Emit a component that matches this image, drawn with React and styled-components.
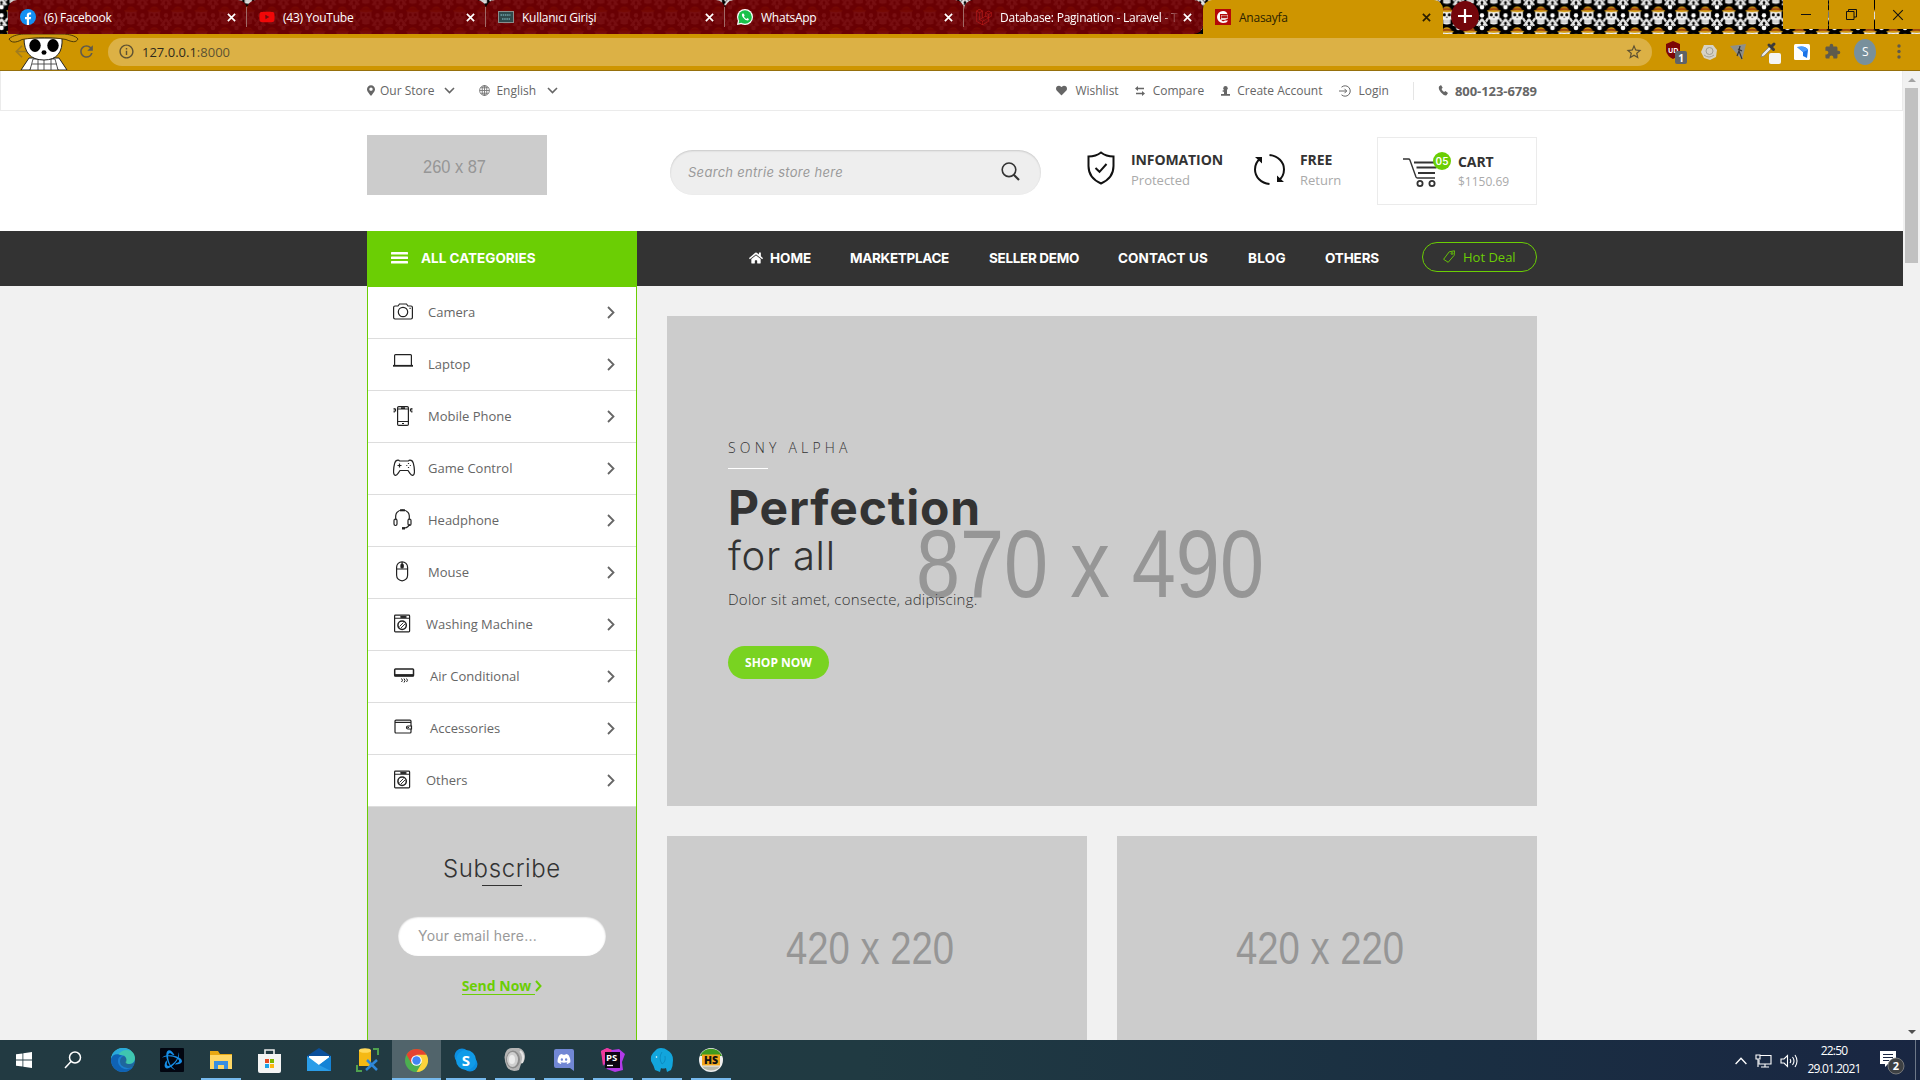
import React from 'react';
import styled, { createGlobalStyle } from 'styled-components';
import {
  FaYoutube, FaLaravel, FaMapMarkerAlt, FaHeart, FaPhoneAlt, FaHome, FaDiscord,
} from 'react-icons/fa';
import { MdExtension, MdStarBorder, MdRefresh, MdArrowBack, MdInfoOutline } from 'react-icons/md';
import { SiBattledotnet } from 'react-icons/si';

const body = '"Open Sans", "Noto Sans", sans-serif';
const display = 'Inter, "Open Sans", sans-serif';
const green = '#6bce04';

const Global = createGlobalStyle`
  * { box-sizing: border-box; }
  html, body { margin: 0; padding: 0; overflow: hidden; }
  body { font-family: ${body}; color: #666; background: #f1f1f1; }
  svg { display: block; flex: none; }
`;

const Screen = styled.div`
  width: 1920px;
  height: 1080px;
  display: flex;
  flex-direction: column;
  overflow: hidden;
`;

/* ---------- browser chrome ---------- */

const TabStrip = styled.div`
  position: relative;
  height: 34px;
  flex: none;
  display: flex;
  background: #000;
`;
const StripArt = styled.svg`
  position: absolute;
  inset: 0;
`;
const Tabs = styled.div`
  position: relative;
  display: flex;
  padding-left: 8px;
`;
const Tab = styled.div`
  width: ${p => p.$w}px;
  height: 34px;
  display: flex;
  align-items: center;
  padding: 0 ${p => (p.$active ? 12 : 0)}px 0 12px;
  font-size: 12px;
  letter-spacing: -0.24px;
  color: ${p => (p.$active ? '#2c1f00' : '#fff')};
  background: ${p => (p.$active ? '#ce9500' : 'rgba(112, 0, 3, 0.94)')};
  border-radius: ${p => (p.$active ? '9px 9px 0 0' : p.$last ? '9px 9px 9px 0' : '9px 9px 0 0')};
`;
const TabIcon = styled.span`
  width: 16px;
  height: 16px;
  display: flex;
  align-items: center;
  justify-content: center;
  margin-right: 8px;
`;
const TabTitle = styled.span`
  flex: 1;
  white-space: nowrap;
  overflow: hidden;
  ${p => p.$fade && 'mask-image: linear-gradient(90deg, #000 160px, transparent 180px);'}
`;
const TabLine = styled.i`
  width: 1px;
  height: 20px;
  margin-left: 10px;
  background: ${p => (p.$hide ? 'transparent' : '#a06a66')};
`;
const NewTab = styled.div`
  width: 28px;
  height: 30px;
  margin: 1px 0 0 8px;
  border-radius: 50%;
  background: #74060b;
  display: flex;
  align-items: center;
  justify-content: center;
`;
const WindowButtons = styled.div`
  position: relative;
  margin-left: auto;
  display: flex;
  gap: 1px;
  height: 29px;
`;
const WindowButton = styled.div`
  width: 45px;
  height: 29px;
  background: #ce9500;
  display: flex;
  align-items: center;
  justify-content: center;
`;

const Toolbar = styled.div`
  height: 37px;
  flex: none;
  display: flex;
  align-items: center;
  padding: 0 12px 1px 0;
  background: #ce9500;
  border-bottom: 1px solid #96700c;
  color: #5f5a4c;
`;
const NavArt = styled.div`
  width: 77px;
  height: 36px;
  display: flex;
  align-items: center;
  position: relative;
  padding-left: 12px;
  color: #9f7b20;
`;
const Mascot = styled.svg`
  position: absolute;
  left: 8px;
  top: 0;
`;
const AddressBar = styled.div`
  width: 1544px;
  height: 28px;
  margin-left: 12px;
  padding: 0 9px 0 10px;
  border-radius: 14px;
  background: #dcb145;
  display: flex;
  align-items: center;
  font-size: 13px;
  color: #5d5132;
`;
const Host = styled.span`
  margin-left: 7px;
  flex: 1;
  b { font-weight: 400; color: #2f2a1c; }
`;
const Extensions = styled.div`
  margin-left: 13px;
  display: flex;
  align-items: center;
  justify-content: space-between;
  flex: 1;
`;
const Avatar = styled.div`
  width: 22px;
  height: 26px;
  border-radius: 50%;
  background: #78909c;
  color: #fff;
  font-size: 12px;
  display: flex;
  align-items: center;
  justify-content: center;
`;

/* ---------- page ---------- */

const Viewport = styled.div`
  display: flex;
  height: 969px;
  flex: none;
`;
const Page = styled.div`
  width: 1903px;
  height: 969px;
  overflow: hidden;
  background: #f1f1f1;
`;
const Scrollbar = styled.div`
  width: 17px;
  display: flex;
  flex-direction: column;
  align-items: center;
  background: #f1f1f1;
`;
const ScrollArrow = styled.div`
  height: 17px;
  display: flex;
  align-items: center;
`;
const Thumb = styled.div`
  width: 13px;
  height: 175px;
  background: #c1c1c1;
  margin-bottom: auto;
`;

const Band = styled.div`
  display: flex;
  padding: 0 366px 0 367px;
`;
const TopBar = styled(Band)`
  height: 40px;
  align-items: center;
  background: #fff;
  border: 1px solid #ebebeb;
  border-top: 0;
  padding: 0 365px 0 366px;
  font-size: 12px;
  color: #666;
`;
const TopItem = styled.div`
  display: flex;
  align-items: center;
  margin-left: ${p => p.$ml || 0}px;
  gap: ${p => p.$gap}px;
  font-size: ${p => (p.$bold ? 13 : 12)}px;
  font-weight: ${p => (p.$bold ? 700 : 400)};
  letter-spacing: ${p => (p.$bold ? -0.05 : 0)}px;
  white-space: nowrap;
`;
const TopLinks = styled.div`
  display: flex;
  align-items: center;
  margin-left: auto;
`;
const Caret = styled.span`
  margin-left: 5px;
`;
const MapPin = styled(FaMapMarkerAlt)`
  width: 8px;
  height: 11px;
`;
const Handset = styled(FaPhoneAlt)`
  width: 10px;
  height: 10px;
  transform: scaleX(-1);
`;
const TopRule = styled.i`
  width: 1px;
  height: 18px;
  margin-left: 24px;
  background: #e5e5e5;
`;

const Header = styled(Band)`
  height: 120px;
  background: #fff;
  align-items: flex-start;
`;
const Logo = styled.div`margin-top: 24px;`;
const Search = styled.div`
  width: 371px;
  height: 45px;
  margin: 39px 0 0 123px;
  padding: 0 21px 2px 18px;
  border-radius: 23px;
  background: #eee;
  box-shadow: inset 0 1px 2px rgba(0, 0, 0, 0.16);
  display: flex;
  align-items: center;
  justify-content: space-between;
  font: italic 13px ${display};
  letter-spacing: 0.29px;
  color: #9a9a9a;
`;
const Feature = styled.div`
  display: flex;
  margin: 39px 0 0 ${p => p.$ml}px;
`;
const FeatureIcon = styled.span`
  margin-top: ${p => p.$mt}px;
`;
const FeatureText = styled.div`
  margin-left: ${p => p.$ml}px;
  font-size: ${p => p.$size || 13}px;
  line-height: 20px;
  color: #aaa;
  b {
    display: block;
    font-size: 14px;
    line-height: 20px;
    color: #333;
    letter-spacing: -0.1px;
  }
`;
const Cart = styled.div`
  width: 160px;
  height: 68px;
  margin: 26px 0 0 auto;
  padding: 14px 0 0 25px;
  border: 1px solid #ebebeb;
  display: flex;
`;
const CartIcon = styled.div`
  position: relative;
  width: 49px;
`;
const CartCount = styled.span`
  position: absolute;
  left: 30px;
  top: 0;
  width: 18px;
  height: 18px;
  border-radius: 50%;
  background: ${green};
  color: #fff;
  font: 600 10px/18px ${display};
  text-align: center;
`;

const NavBar = styled(Band)`
  height: 55px;
  background: #333;
  align-items: center;
`;
const AllCategories = styled.div`
  width: 270px;
  height: 56px;
  align-self: flex-start;
  padding: 0 0 2px 24px;
  display: flex;
  align-items: center;
  gap: 13px;
  background: ${green};
  color: #fff;
  font: 700 13.5px ${display};
`;
const NavLink = styled.div`
  display: flex;
  align-items: center;
  width: ${p => p.$w}px;
  margin-left: ${p => p.$ml}px;
  padding-bottom: 2px;
  gap: 7px;
  color: #fff;
  font: 700 13.5px ${display};
  letter-spacing: ${p => p.$ls}px;
  white-space: nowrap;
`;
const HotDeal = styled.div`
  width: 115px;
  height: 30px;
  margin-left: auto;
  margin-bottom: 4px;
  border: 1px solid ${green};
  border-radius: 16px;
  display: flex;
  align-items: center;
  padding-left: 20px;
  gap: 8px;
  color: ${green};
  font-size: 13px;
`;

const Content = styled(Band)`
  height: 754px;
  align-items: flex-start;
`;
const Sidebar = styled.div`
  width: 270px;
  height: 754px;
  margin-top: 1px;
  border: solid ${green};
  border-width: 0 1px;
  background: #ccc;
`;
const Category = styled.div`
  height: 52px;
  display: flex;
  align-items: center;
  padding: 0 21px 2px 25px;
  border-bottom: 1px solid #ddd;
  background: #fff;
  font-size: 13px;
  color: #666;
`;
const CategoryIcon = styled.span`
  width: ${p => p.$w}px;
`;
const CategoryName = styled.span`flex: 1;`;
const CategoryArrow = styled.span`padding-top: 2px;`;

const Subscribe = styled.div`
  display: flex;
  flex-direction: column;
  align-items: center;
  padding-top: 45px;
`;
const SubscribeTitle = styled.h3`
  margin: 0;
  font: 300 24px/33px ${display};
  letter-spacing: 0.6px;
  color: #333;
`;
const Dash = styled.i`
  width: 40px;
  height: 1px;
  background: ${p => p.$color};
`;
const EmailField = styled.div`
  width: 208px;
  height: 40px;
  margin-top: 30px;
  padding-left: 20px;
  border-radius: 20px;
  background: #fff;
  box-shadow: inset 0 1px 2px rgba(0, 0, 0, 0.25);
  font: 400 14px/39px ${display};
  letter-spacing: 0.22px;
  color: #999;
`;
const SendNow = styled.div`
  display: flex;
  align-items: center;
  margin-top: 21px;
  color: ${green};
  font-size: 14px;
  font-weight: 700;
  span { border-bottom: 1px solid ${green}; line-height: 17px; padding-right: 4px; }
`;

const Main = styled.div`
  margin: 30px 0 0 30px;
  display: flex;
  flex-direction: column;
  gap: 30px;
`;
const Hero = styled.div`
  position: relative;
  width: 870px;
  height: 490px;
  background: #ccc;
`;
const HeroPicture = styled.div`
  position: absolute;
  inset: 0;
`;
const HeroCopy = styled.div`
  position: relative;
  display: flex;
  flex-direction: column;
  align-items: flex-start;
  padding: 122px 0 0 61px;
  color: #333;
`;
const Kicker = styled.div`
  font-size: 14px;
  font-weight: 300;
  line-height: 20px;
  letter-spacing: 4.2px;
  margin-bottom: 10px;
`;
const Title = styled.div`
  margin-top: 15px;
  font: 700 48px/48px ${display};
  letter-spacing: 0.85px;
`;
const Subtitle = styled.div`
  font: 300 40px/48px ${display};
  letter-spacing: 0.7px;
`;
const Blurb = styled.div`
  margin-top: 7px;
  font-size: 15px;
  font-weight: 300;
  line-height: 24px;
  letter-spacing: 0.26px;
`;
const ShopNow = styled.div`
  width: 101px;
  height: 33px;
  margin-top: 35px;
  border-radius: 17px;
  background: #79d321;
  color: #fff;
  font-size: 12px;
  font-weight: 700;
  line-height: 33px;
  text-align: center;
`;
const Promos = styled.div`
  display: flex;
  gap: 30px;
`;

/* ---------- taskbar ---------- */

const Taskbar = styled.div`
  height: 40px;
  flex: none;
  display: flex;
  background: linear-gradient(90deg, #223a42 0%, #203a42 45%, #1a2f42 75%, #192642 100%);
  color: #fff;
`;
const TaskSlot = styled.div`
  width: 49px;
  height: 40px;
  display: flex;
  flex-direction: column;
  align-items: center;
  justify-content: space-between;
  background: ${p => (p.$active ? '#51646b' : 'transparent')};
`;
const TaskIcon = styled.span`
  height: 38px;
  display: flex;
  align-items: center;
  padding: ${p => (p.$shift ? '2px 2px 0 0' : '2px 0 0')};
`;
const TaskLine = styled.i`
  width: ${p => (p.$active ? 49 : 40)}px;
  height: 2px;
  background: ${p => (p.$on ? '#76b9ed' : 'transparent')};
`;
const Tray = styled.div`
  margin-left: auto;
  display: flex;
  align-items: center;
`;
const TrayIcons = styled.div`
  display: flex;
  align-items: center;
  gap: 8px;
  padding-top: 1px;
`;
const Clock = styled.div`
  width: 54px;
  margin: 0 18px 0 9px;
  text-align: center;
  font-size: 12px;
  line-height: 18px;
  letter-spacing: -0.82px;
`;
const Notifications = styled.div`
  padding-top: 3px;
  margin-right: 10px;
`;
const ShowDesktop = styled.i`
  width: 5px;
  height: 40px;
  border-left: 1px solid #6d7788;
`;

/* ---------- drawings ---------- */

const SkullPattern = () => (
  <StripArt width="1920" height="34">
    <defs>
      <pattern id="skulls" x="1411.5" y="5.300" width="23.5" height="20.700" patternUnits="userSpaceOnUse">
        <path d="M6 13L0 22.500M17.500 13l6 9.500M6 -7.700L0 1.800M17.500 -7.700l6 9.500M4 0L-2 -8M19.500 0l6-8M5 20.700L-3 10M18.500 20.700l8-10.700" stroke="#e6e6e6" strokeWidth="2.300" strokeDasharray="4 .6" fill="none" />
        <circle cx="0" cy="2" r="2.300" fill="#fff" /><circle cx="23.500" cy="2" r="2.300" fill="#fff" />
        <circle cx="0" cy="10" r="2.200" fill="#fff" /><circle cx="23.500" cy="10" r="2.200" fill="#fff" />
        <path d="M6.200 6h11.200v6.500q0 1.500-2 2v4q-3.600 1.500-7.200 0v-4q-2-.5-2-2z" fill="#f2f2f2" />
        <path d="M9.800 14.500v3.500M11.800 14.500v3.500M13.800 14.500v3.500" stroke="#888" strokeWidth=".6" />
        <circle cx="9.300" cy="9.500" r="1.500" /><circle cx="14.300" cy="9.500" r="1.500" /><circle cx="11.800" cy="12" r=".7" />
        <ellipse cx="11.800" cy="5.600" rx="7" ry="1.300" fill="#d29a10" />
        <path d="M7.800 4.500c0-4.200 8-4.200 8 0z" fill="#d29a10" />
        <path d="M7.500 5.300q4.300-1.400 8.600 0v-2q-4.300-1.200-8.600 0z" fill="#a4480c" />
      </pattern>
    </defs>
    <rect width="1920" height="34" fill="url(#skulls)" />
  </StripArt>
);

const Cross = ({ s = 9, c = 'currentColor', w = 1.9 }) => (
  <svg width={s} height={s} viewBox="0 0 10 10"><path d="M1 1l8 8M9 1L1 9" stroke={c} strokeWidth={w} /></svg>
);
const Chevron = ({ w = 8, h = 13, sw = 1.8, down, c = 'currentColor' }) => (
  <svg width={w} height={h} viewBox={`0 0 ${w} ${h}`} fill="none" stroke={c} strokeWidth={sw}>
    {down ? <path d={`M1 1 L${w / 2} ${h - 1.5} L${w - 1} 1`} /> : <path d={`M1 1 L${w - 1.5} ${h / 2} L1 ${h - 1}`} />}
  </svg>
);

const Facebook = () => (
  <svg width="16" height="16"><circle cx="8" cy="8" r="8" fill="#1490f2" /><path d="M6.800 16V10.200H5V8h1.800V6.300C6.800 4.300 8 3.400 9.600 3.400l1.500.1v1.900h-1c-.9 0-1.100.5-1.100 1.100V8h2.100l-.4 2.200H9V16z" fill="#fff" /></svg>
);
const WhatsApp = () => (
  <svg width="16" height="16"><circle cx="8" cy="8" r="8" fill="#fff" /><path d="M0 16l1-5 4 4z" fill="#fff" /><circle cx="8" cy="8" r="6.800" fill="#18c14a" /><path d="M1.500 14.600l1-3.500 2.500 2.500z" fill="#18c14a" /><path d="M5.500 4.500q-1.500 1 .5 4t5 3q1.500-1 .5-1.800l-1-.6-1 .8q-2-.8-2.500-2.500l.6-.8-.7-1.800q-.6-.6-1.400-.3z" fill="#fff" /></svg>
);
const Exam = () => (
  <svg width="16" height="12" viewBox="0 0 16 12"><rect width="16" height="12" fill="#8a8d8c" /><rect x="1" y="1" width="14" height="10" fill="#2f4a4c" /><path d="M2.500 4h10M4 8h8" stroke="#6fa3a8" strokeWidth="1.500" strokeDasharray="1.500 .7" /></svg>
);
const SiteIcon = () => (
  <svg width="16" height="16"><rect width="16" height="16" fill="#b40808" /><path d="M8 2a6 6 0 1 0 0 12q4 0 5-2.500h-3l-2 1-3-2.500V5h6.500l1 .5Q12 2 8 2z" fill="#fff" /><path d="M6 6h7v3.500l-3 1.500H6z" fill="#e9d0d0" /><path d="M6.500 6.500h6V9h-6z" fill="#b11a1a" /></svg>
);

const MascotArt = () => (
  <Mascot width="72" height="36" viewBox="0 0 72 36">
    <path d="M13 36 L21 24 L27 24 L22 36z M59 36 L51 24 L45 24 L50 36z" fill="#fff" stroke="#222" strokeWidth="1" />
    <path d="M25 25h22l3 11H22z" fill="#fff" stroke="#333" strokeWidth=".8" />
    <path d="M30 25v11M36 25v11M43 25v11M24 30h25" stroke="#444" strokeWidth=".9" />
    <path d="M16 4 C16 18 22 26 36 26 C49 26 55 18 54 4z" fill="#fff" stroke="#222" strokeWidth="1" />
    <ellipse cx="27" cy="11.500" rx="5.700" ry="6.500" fill="#000" /><ellipse cx="45" cy="11.500" rx="5.700" ry="6.500" fill="#000" />
    <ellipse cx="36" cy="18.500" rx="2.500" ry="2.300" fill="#000" />
    <path d="M1 5 C5 1 12 0 18 0 H54 C61 0 68 2 70 5 C68 9 64 8 58 5.500 C45 3 28 3 14 5.500 C8 9 3 9 1 5z" fill="#cf9a10" stroke="#4d3a08" strokeWidth="1" />
  </Mascot>
);

const Placeholder = ({ w, h, label, tx, ty, tw, size }) => (
  <svg width={w} height={h}>
    <rect width={w} height={h} fill="#ccc" />
    <text x={tx} y={ty} fontFamily="Liberation Sans, sans-serif" fontSize={size} fill="#969696" textLength={tw} lengthAdjust="spacingAndGlyphs">{label}</text>
  </svg>
);

const ink = { fill: 'none', stroke: '#222', strokeWidth: 1.2 };
const Camera = () => (
  <svg width="20" height="17" viewBox="0 0 20 17" {...ink}><path d="M2 3h3l1.500-2h7L15 3h3q1.400 0 1.400 1.400v10.200q0 1.400-1.400 1.400H2Q.6 16 .6 14.600V4.400Q.6 3 2 3z" /><circle cx="10" cy="9" r="4.700" /><path d="M16.500 5.300h1.200" /></svg>
);
const Laptop = () => (
  <svg width="20" height="20" viewBox="0 0 20 20" {...ink}><path d="M1.600 11V1.500q0-.9.900-.9h15q.9 0 .9.900V11" /><path d="M0 11.800h20" strokeWidth="1.800" /></svg>
);
const Phone = () => (
  <svg width="20" height="20" viewBox="0 0 20 20" {...ink}><rect x="4.600" y=".6" width="10.800" height="18.800" rx="1.200" /><path d="M4.600 3h10.800M4.600 15.500h10.800M8 1.800h4M9 17.500h2" /><path d="M1.200 2v1.800M2.500 2.500v3M1.200 4.500v2M18.800 2v1.800M17.500 2.500v3M18.800 4.500v2" /></svg>
);
const Gamepad = () => (
  <svg width="22" height="17" viewBox="0 0 22 17" {...ink}><path d="M5 1.200q-2.500 0-3.300 3Q.4 9 .6 13.500q.2 2.900 2 2.900 1.400 0 2.300-1.800L7 11.500h8l2.100 3.100q.9 1.800 2.300 1.800 1.800 0 2-2.900.200-4.500-1.100-9.300-.8-3-3.300-3-1 0-1.600.8H6.600Q6 1.200 5 1.200z" /><path d="M6.500 4.500v4M4.500 6.500h4M15.500 4v1M15.500 8v1M13.300 6.500h1M16.800 6.500h1" /></svg>
);
const Headphone = () => (
  <svg width="20" height="21" viewBox="0 0 20 21" {...ink}><path d="M3 11C1.500 4 5 1 9.500 1S17.500 4 16 11M16.500 15q-1 3.500-5 4" /><path d="M7 1.300h5" strokeWidth="2" /><rect x="1" y="10" width="3" height="6.500" rx="1.400" /><rect x="15" y="10" width="3" height="6.500" rx="1.400" /><path d="M9 19.300h3" strokeWidth="2.400" /></svg>
);
const Mouse = () => (
  <svg width="18" height="21" viewBox="0 0 18 21" {...ink}><rect x="3.600" y=".8" width="11" height="19" rx="5.500" /><path d="M3.600 8h11M9.100 1v2" /><rect x="8" y="3" width="2.200" height="4" rx="1" fill="#222" /></svg>
);
const Washer = () => (
  <svg width="18" height="19" viewBox="0 0 18 19" {...ink}><rect x="1.600" y="1.100" width="15" height="16.800" rx=".8" /><path d="M2 4.200h14M7.500 2.700h5" strokeWidth="1.100" /><path d="M7.500 3h6" strokeWidth="1.800" /><circle cx="9.100" cy="11.200" r="4.200" strokeWidth="1.500" /><path d="M6.500 12.500l4-4M8 14l4-4" strokeWidth=".9" /></svg>
);
const AirCon = () => (
  <svg width="22" height="17" viewBox="0 0 22 17" {...ink}><rect x="1.700" y="2" width="18.800" height="7" rx=".8" strokeWidth="1.500" /><path d="M1.500 8.200h19" strokeWidth="2.200" /><path d="M8.500 11.500q2 1.800 0 3.500M11 11.500q2 2 0 4M13.500 11.500q2 1.800 0 3.500" strokeWidth="1" /></svg>
);
const Wallet = () => (
  <svg width="20" height="17" viewBox="0 0 20 17" {...ink}><rect x="2" y="1.200" width="16" height="12.800" rx="1" /><path d="M2 3.400h16" /><path d="M18.500 7h-3.500q-1.500 0-1.500 1.500t1.500 1.500h3.500z" fill="#fff" /><path d="M14.500 8.500h1.500" /></svg>
);

const Shield = () => (
  <svg width="28" height="34" viewBox="0 0 28 34" fill="none" stroke="#111" strokeWidth="2"><path d="M14 1.500Q9 5.500 1.500 5.500V15Q1.500 27 14 32.500 26.500 27 26.500 15V5.500Q19 5.500 14 1.500z" /><path d="M8.500 17l4 3.800L19.500 13" /></svg>
);
const Return = () => (
  <svg width="31" height="31" viewBox="0 0 31 31" fill="none" stroke="#111" strokeWidth="2"><path d="M15.500 30C7 29 1 23 1 15.500 1 10 3.500 6.500 7 4M15.500 1C24 2 30 8 30 15.500c0 5.500-2.500 9-6 11.500" /><path d="M1 3h7v6.500zM30 28h-7v-6.500z" fill="#111" stroke="none" /></svg>
);
const CartArt = () => (
  <svg width="38" height="36" viewBox="0 0 38 36" fill="none" stroke="#333" strokeWidth="1.400"><path d="M0 7h5.500q1 0 1.400 1L13 25q.4 1 1.500 1H32" /><path d="M11 10.500h24M13.500 15.500h20M15 21h17" strokeWidth="1.900" /><circle cx="17" cy="31.500" r="2.600" strokeWidth="1.800" /><circle cx="29" cy="31.500" r="2.600" strokeWidth="1.800" /></svg>
);

/* ---------- data ---------- */

const tabs = [
  { title: '(6) Facebook', icon: <Facebook />, w: 239 },
  { title: '(43) YouTube', icon: <FaYoutube color="#f00808" size={16} />, w: 239 },
  { title: 'Kullanıcı Girişi', icon: <Exam />, w: 239 },
  { title: 'WhatsApp', icon: <WhatsApp />, w: 239 },
  { title: 'Database: Pagination - Laravel - T', icon: <FaLaravel color="#c51d1d" size={16} />, w: 239, last: true },
  { title: 'Anasayfa', icon: <SiteIcon />, w: 240, active: true },
];

const categories = [
  ['Camera', <Camera />, 35], ['Laptop', <Laptop />, 35], ['Mobile Phone', <Phone />, 35],
  ['Game Control', <Gamepad />, 35], ['Headphone', <Headphone />, 35], ['Mouse', <Mouse />, 35],
  ['Washing Machine', <Washer />, 33], ['Air Conditional', <AirCon />, 37],
  ['Accessories', <Wallet />, 37], ['Others', <Washer />, 33],
];

const links = [
  ['MARKETPLACE', 99, 40, -0.32], ['SELLER DEMO', 90, 40, -0.32], ['CONTACT US', 90, 39, 0.1],
  ['BLOG', 38, 40, 0.3], ['OTHERS', 54, 39, -0.16],
];

const tasks = [
  { shift: true, icon: <svg width="16" height="16" fill="#fff"><path d="M0 2.300l6.500-.9v6.200H0zM7.300 1.300L16 0v7.600H7.300zM0 8.400h6.500v6.200L0 13.700zM7.300 8.400H16V16l-8.700-1.300z" /></svg> },
  { shift: true, icon: <svg width="18" height="18" fill="none" stroke="#fff" strokeWidth="1.500"><circle cx="11" cy="6.500" r="5.500" /><path d="M7 10.500L1 17" /></svg> },
  { icon: <svg width="24" height="24" viewBox="0 0 24 24"><circle cx="12" cy="12" r="12" fill="#1c7fd0" /><path d="M0 11C1 4 6 0 12 0c7 0 12 5 12 10 0 4-3 6-6 6-4 0-4-2-3-3 1-3-1-6-5-6C5 7 1 9 0 11z" fill="#3fc6b0" /><path d="M0 11C1 4 6 0 12 0q5 0 8 3-8-3-13 4-4 0-7 4z" fill="#2aa9dc" /><path d="M15.500 13c-1 2 0 3 2.500 3 3 0 5-1 6-4q-.5 4-2 7-7 3-12-2-2-4 0-7 1-2 3-2 3 2 2.500 5z" fill="#223a42" opacity=".35" /><path d="M0 11c1-5 7-6 11-3-5 0-5 7-2 10 3 4 8 4 13 1-3 5-12 7-18 2q-4-4-4-10z" fill="#0f62b4" /></svg> },
  { icon: <svg width="24" height="24"><rect width="24" height="24" rx="1" fill="#020510" /><g transform="translate(2 2)"><SiBattledotnet size={20} color="#168de6" /></g></svg> },
  { on: true, icon: <svg width="22" height="20"><path d="M0 1h8l2 3h12v15H0z" fill="#e8a813" /><path d="M0 5h22v14H0z" fill="#ffd766" /><path d="M4 19v-8h14v8h-4v-4H8v4z" fill="#3a8ee0" /></svg> },
  { icon: <svg width="23" height="25"><path d="M7 7V2h9v5" fill="none" stroke="#eee" strokeWidth="1.600" /><path d="M0 6h23v17q0 2-2 2H2q-2 0-2-2z" fill="#f4f4f4" /><path d="M7 11h4v4H7z" fill="#e74a24" /><path d="M12 11h4v4h-4z" fill="#7db700" /><path d="M7 16h4v4H7z" fill="#1ca3ea" /><path d="M12 16h4v4h-4z" fill="#fcb813" /></svg> },
  { icon: <svg width="24" height="24"><path d="M0 8L12 0l12 8v5H0z" fill="#0a4f9b" /><path d="M2 8h20v9H2z" fill="#fff" /><path d="M0 8l12 9 12-9v15H0z" fill="#2a9de8" /><path d="M24 8v15L12 17z" fill="#1583d6" /></svg> },
  { icon: <svg width="24" height="24"><path d="M3 2h12v16H3z" fill="#f5b914" /><ellipse cx="9" cy="2.500" rx="6" ry="2.300" fill="#ffd95a" /><path d="M17 1h5v6M6 23H1v-6" fill="none" stroke="#4fa24f" strokeWidth="2" /><path d="M10 22L21 12M11 12l10 10" stroke="#2f87d8" strokeWidth="2.500" /></svg> },
  { on: true, active: true, icon: <svg width="23" height="23" viewBox="0 0 24 24"><circle cx="12" cy="12" r="12" fill="#4caf50" /><path d="M12 12L1.600 6A12 12 0 0 1 22.400 6z" fill="#e5432f" /><path d="M12 6h10.400A12 12 0 0 1 12 24l5.200-9z" fill="#fdd23c" /><path d="M1.600 6L6.800 15 12 12V6z" fill="#e5432f" /><circle cx="12" cy="12" r="5.600" fill="#fff" /><circle cx="12" cy="12" r="4.400" fill="#4285f4" /></svg> },
  { on: true, icon: <svg width="24" height="24"><circle cx="8" cy="8" r="7.500" fill="#0c8ee0" /><circle cx="16" cy="16" r="7.500" fill="#0c8ee0" /><circle cx="12" cy="12" r="10" fill="#109be8" /><text x="12" y="17.500" textAnchor="middle" fontFamily="Open Sans, sans-serif" fontWeight="700" fontSize="15" fill="#fff">S</text></svg> },
  { on: true, icon: <svg width="22" height="24"><path d="M8 0q12-2 13 8 0 6-4 8l-2 6q-8 3-12-3Q-2 8 3 2 5 0 8 0z" fill="#b4b4b4" /><ellipse cx="9" cy="11.500" rx="7" ry="9" fill="#8d8d8d" /><ellipse cx="8.500" cy="11.500" rx="5.500" ry="7.500" fill="#cfcfcf" /><ellipse cx="8" cy="11.500" rx="3" ry="4.500" fill="#ececec" /><path d="M16 3q5 4 2 12" stroke="#e4e4e4" fill="none" strokeWidth="2" /></svg> },
  { on: true, icon: <svg width="20" height="22"><path d="M2 0h16q2 0 2 2v20l-4-3H2q-2 0-2-2V2Q0 0 2 0z" fill="#7187d4" /><g transform="translate(3 3)"><FaDiscord size={14} color="#fff" /></g></svg> },
  { on: true, icon: <svg width="24" height="24"><path d="M0 3l6-3 5 2 7-1 6 5-3 8 1 8-8 2-8-3-3-5z" fill="#b23ae8" /><path d="M0 3l6-3 5 2-6 10-3 6z" fill="#ef3a9b" /><rect x="4" y="4" width="15" height="16" fill="#0c0612" /><text x="5" y="13" fontFamily="Open Sans, sans-serif" fontWeight="700" fontSize="9.500" fill="#fff">PS</text><path d="M6 17.500h6" stroke="#fff" strokeWidth="1.300" /></svg> },
  { on: true, icon: <svg width="24" height="24"><path d="M1 13Q0 7 5 3q2-3 6-3 4 0 6 2 6 3 6 10 0 6-2 10l-4 2-1-4q-3 1-5 0l-1 4-5-2q-1-4-4-9z" fill="#12a5dc" /><path d="M12 4q-4 6 0 12M12 16q4-2 3-8" stroke="#0b8dc2" fill="none" /><circle cx="6.500" cy="9" r=".8" fill="#fff" /></svg> },
  { on: true, icon: <svg width="24" height="24"><circle cx="12" cy="12" r="12" fill="#efefef" /><path d="M1 8A12 12 0 0 1 23 8z" fill="#3f9a1f" /><path d="M3 18.500a12 12 0 0 0 18 0z" fill="#b9b9a9" /><rect x="3" y="6.500" width="18" height="11" fill="#f2a71b" /><text x="12" y="16" textAnchor="middle" fontFamily="Open Sans, sans-serif" fontWeight="800" fontSize="10.500" fill="#111">HS</text></svg> },
];

/* ---------- app ---------- */

export default function App() {
  return (
    <Screen>
      <Global />
      <TabStrip>
        <SkullPattern />
        <Tabs>
          {tabs.map((t, i) => (
            <Tab key={t.title} $w={t.w} $active={t.active} $last={t.last}>
              <TabIcon>{t.icon}</TabIcon>
              <TabTitle $fade={t.last}>{t.title}</TabTitle>
              <Cross />
              {!t.active && <TabLine $hide={i === 4} />}
            </Tab>
          ))}
          <NewTab><svg width="14" height="14"><path d="M7 0v14M0 7h14" stroke="#fff" strokeWidth="2.200" /></svg></NewTab>
        </Tabs>
        <WindowButtons>
          <WindowButton><svg width="10" height="1"><rect width="10" height="1" fill="#111" /></svg></WindowButton>
          <WindowButton><svg width="11" height="11" fill="none" stroke="#111"><path d="M.5 2.500h7.500v8H.5zM2.500 2.500v-2h8v7.500H8" /></svg></WindowButton>
          <WindowButton><Cross s={12} w={0.9} c="#111" /></WindowButton>
        </WindowButtons>
      </TabStrip>

      <Toolbar>
        <NavArt><MdArrowBack size={19} /><MascotArt /></NavArt>
        <MdRefresh size={19} />
        <AddressBar>
          <MdInfoOutline size={17} />
          <Host><b>127.0.0.1</b>:8000</Host>
          <MdStarBorder size={18} />
        </AddressBar>
        <Extensions>
          <svg width="22" height="26"><path d="M1 5l7-3 7 3v7q-1 5-7 8-6-3-7-8z" fill="#7c0606" /><text x="3" y="13.500" fontFamily="Open Sans, sans-serif" fontWeight="700" fontSize="7" fill="#fff">UD</text><rect x="10" y="12" width="12" height="13" rx="2" fill="#5f6368" /><text x="16" y="22.500" textAnchor="middle" fontFamily="Open Sans, sans-serif" fontWeight="700" fontSize="10" fill="#fff">1</text></svg>
          <svg width="16" height="16"><path d="M3 1h9l4 5-1 7-6 3-6-2-3-6z" fill="#d6d2c6" /><circle cx="8.500" cy="7" r="3.500" fill="none" stroke="#a19e92" /><path d="M3 11q5 4 10 0" stroke="#a5a296" fill="none" /></svg>
          <svg width="16" height="16"><path d="M0 2l16-2-4 16z" fill="#8f8f88" /><path d="M10 2l-1 5 3 8M9 7l-2 5M8 5l4 2" stroke="#333" strokeWidth="1.200" fill="none" /></svg>
          <svg width="21" height="24"><path d="M1 17l1-3 8-8 2 2-8 8z" fill="#e9e9e9" stroke="#777" strokeWidth=".7" /><path d="M9 5l4.500 4.500M11 7l3-3" stroke="#3a3a3a" strokeWidth="3" strokeLinecap="round" /><rect x="9" y="13" width="12" height="11" rx="2" fill="#f4f4f4" /></svg>
          <svg width="16" height="16"><rect width="16" height="16" rx="1.500" fill="#fff" /><path d="M3 3q9-2 11 3l-1 8-4-2V8z" fill="#1a73e8" /><path d="M3 3l6 5 5-2q-3-5-11-3z" fill="#4b9bff" /></svg>
          <MdExtension size={17} />
          <Avatar>S</Avatar>
          <svg width="18" height="16" fill="#5f5a4c"><circle cx="9" cy="2" r="1.700" /><circle cx="9" cy="7.500" r="1.700" /><circle cx="9" cy="13" r="1.700" /></svg>
        </Extensions>
      </Toolbar>

      <Viewport>
        <Page>
          <TopBar>
            <TopItem $gap={5}><MapPin />Our Store<Caret><Chevron down w={11} h={7} sw={1.600} /></Caret></TopItem>
            <TopItem $gap={6} $ml={24}>
              <svg width="11" height="11" fill="none" stroke="#777" strokeWidth=".9"><circle cx="5.500" cy="5.500" r="4.900" /><ellipse cx="5.500" cy="5.500" rx="2.300" ry="4.900" /><path d="M5.500 0v11M.5 5.500h10M1.500 2.800h8M1.500 8.200h8" /></svg>
              English<Caret><Chevron down w={11} h={7} sw={1.600} /></Caret>
            </TopItem>
            <TopLinks>
              <TopItem $gap={8}><FaHeart size={11} />Wishlist</TopItem>
              <TopItem $gap={8} $ml={16}>
                <svg width="10" height="10" fill="#666"><path d="M0 2.500L3 0v1.700h6v1.600H3V5zM10 7.500L7 5v1.700H1v1.600h6V10z" /></svg>Compare
              </TopItem>
              <TopItem $gap={7} $ml={17}><svg width="9" height="10" fill="#666"><circle cx="4.500" cy="2.200" r="2.200" /><path d="M3 4h3v4h3v1.700H0V8h3V6L1 5z" /></svg>Create Account</TopItem>
              <TopItem $gap={8} $ml={16}>
                <svg width="12" height="12" fill="none" stroke="#666"><path d="M2.500 2.200a5.200 5.200 0 1 1 0 7.600M0 6h7.500M5.500 3.800L7.700 6 5.500 8.200" /></svg>Login
              </TopItem>
              <TopRule />
              <TopItem $gap={7} $ml={24} $bold><svg width="10" height="11" fill="#666"><path d="M1 1.500L3 0l1.700 2.700-1.200 1.200q.8 2 2.600 3l1.300-1L10 8 8.500 10.300Q6 11 3 7.500T1 1.500z" /></svg>800-123-6789</TopItem>
            </TopLinks>
          </TopBar>

          <Header>
            <Logo><Placeholder w={180} h={60} label="260 x 87" tx={56} ty={38} tw={63} size={19} /></Logo>
            <Search>
              Search entrie store here
              <svg width="19" height="19" fill="none" stroke="#333" strokeWidth="1.600"><circle cx="8" cy="7.800" r="6.800" /><path d="M12.500 12.500l5.500 5.500" strokeWidth="2.200" /></svg>
            </Search>
            <Feature $ml={46}><FeatureIcon $mt={1}><Shield /></FeatureIcon><FeatureText $ml={16}><b>INFOMATION</b>Protected</FeatureText></Feature>
            <Feature $ml={31}><FeatureIcon $mt={4}><Return /></FeatureIcon><FeatureText $ml={15}><b>FREE</b>Return</FeatureText></Feature>
            <Cart>
              <CartIcon><CartArt /><CartCount>05</CartCount></CartIcon>
              <FeatureText $ml={6} $size={12}><b>CART</b>$1150.69</FeatureText>
            </Cart>
          </Header>

          <NavBar>
            <AllCategories>
              <svg width="17" height="12" fill="#fff"><rect width="17" height="2.500" rx=".6" /><rect y="4.500" width="17" height="2.500" rx=".6" /><rect y="9" width="17" height="2.500" rx=".6" /></svg>
              ALL CATEGORIES
            </AllCategories>
            <NavLink $w={61} $ml={112} $ls={-0.05}><FaHome size={14} />HOME</NavLink>
            {links.map(([t, w, ml, ls]) => <NavLink key={t} $w={w} $ml={ml} $ls={ls}>{t}</NavLink>)}
            <HotDeal>
              <svg width="12" height="13" fill="none" stroke={green} strokeWidth=".9"><path d="M11.500.8l-.3 4.500-6 7L.6 9.300l5.600-7.500z" /><circle cx="9" cy="3.500" r=".9" /></svg>
              Hot Deal
            </HotDeal>
          </NavBar>

          <Content>
            <Sidebar>
              {categories.map(([name, icon, w]) => (
                <Category key={name}>
                  <CategoryIcon $w={w}>{icon}</CategoryIcon>
                  <CategoryName>{name}</CategoryName>
                  <CategoryArrow><Chevron /></CategoryArrow>
                </Category>
              ))}
              <Subscribe>
                <SubscribeTitle>Subscribe</SubscribeTitle>
                <Dash $color="#333" />
                <EmailField>Your email here...</EmailField>
                <SendNow><span>Send Now</span><Chevron w={7} h={12} sw={2} /></SendNow>
              </Subscribe>
            </Sidebar>
            <Main>
              <Hero>
                <HeroPicture>
                  <Placeholder w={870} h={490} label="870 x 490" tx={249} ty={281} tw={348} size={97} />
                </HeroPicture>
                <HeroCopy>
                  <Kicker>SONY ALPHA</Kicker>
                  <Dash $color="#fff" />
                  <Title>Perfection</Title>
                  <Subtitle>for all</Subtitle>
                  <Blurb>Dolor sit amet, consecte, adipiscing.</Blurb>
                  <ShopNow>SHOP NOW</ShopNow>
                </HeroCopy>
              </Hero>
              <Promos>
                <Placeholder w={420} h={220} label="420 x 220" tx={119} ty={128} tw={168} size={46} />
                <Placeholder w={420} h={220} label="420 x 220" tx={119} ty={128} tw={168} size={46} />
              </Promos>
            </Main>
          </Content>
        </Page>
        <Scrollbar>
          <ScrollArrow><svg width="8" height="4" fill="#a3a3a3"><path d="M0 4l4-4 4 4z" /></svg></ScrollArrow>
          <Thumb />
          <ScrollArrow><svg width="8" height="4" fill="#505050"><path d="M0 0l4 4 4-4z" /></svg></ScrollArrow>
        </Scrollbar>
      </Viewport>

      <Taskbar>
        {tasks.map((t, i) => (
          <TaskSlot key={i} $active={t.active}>
            <TaskIcon $shift={t.shift}>{t.icon}</TaskIcon>
            <TaskLine $on={t.on} $active={t.active} />
          </TaskSlot>
        ))}
        <Tray>
          <TrayIcons>
            <svg width="12" height="8" fill="none" stroke="#fff" strokeWidth="1.300"><path d="M.6 7L6 1.200 11.400 7" /></svg>
            <svg width="17" height="14" fill="none" stroke="#fff" strokeWidth="1.100"><path d="M5 1.500h11v8.500H4V6M10 10v3M6 13h8" /><path d="M1 1h4v4H1zM3 5v8" /></svg>
            <svg width="18" height="14" fill="none" stroke="#fff" strokeWidth="1.100"><path d="M1 5h3l3.500-3.500v11L4 9H1zM10 5q1.500 2 0 4M12.500 3q3 4 0 8M15 1q4 6 0 12" /></svg>
          </TrayIcons>
          <Clock>22:50<br />29.01.2021</Clock>
          <Notifications>
            <svg width="26" height="26"><path d="M1 2h16v13H9l-3 3v-3H1z" fill="#fff" /><path d="M4 5.500h10M4 8.500h10M4 11.500h6" stroke="#192642" /><circle cx="17" cy="17" r="8" fill="#3d4043" stroke="#888" strokeWidth=".8" /><text x="17" y="21" textAnchor="middle" fontFamily="Open Sans, sans-serif" fontWeight="700" fontSize="11" fill="#fff">2</text></svg>
          </Notifications>
          <ShowDesktop />
        </Tray>
      </Taskbar>
    </Screen>
  );
}
